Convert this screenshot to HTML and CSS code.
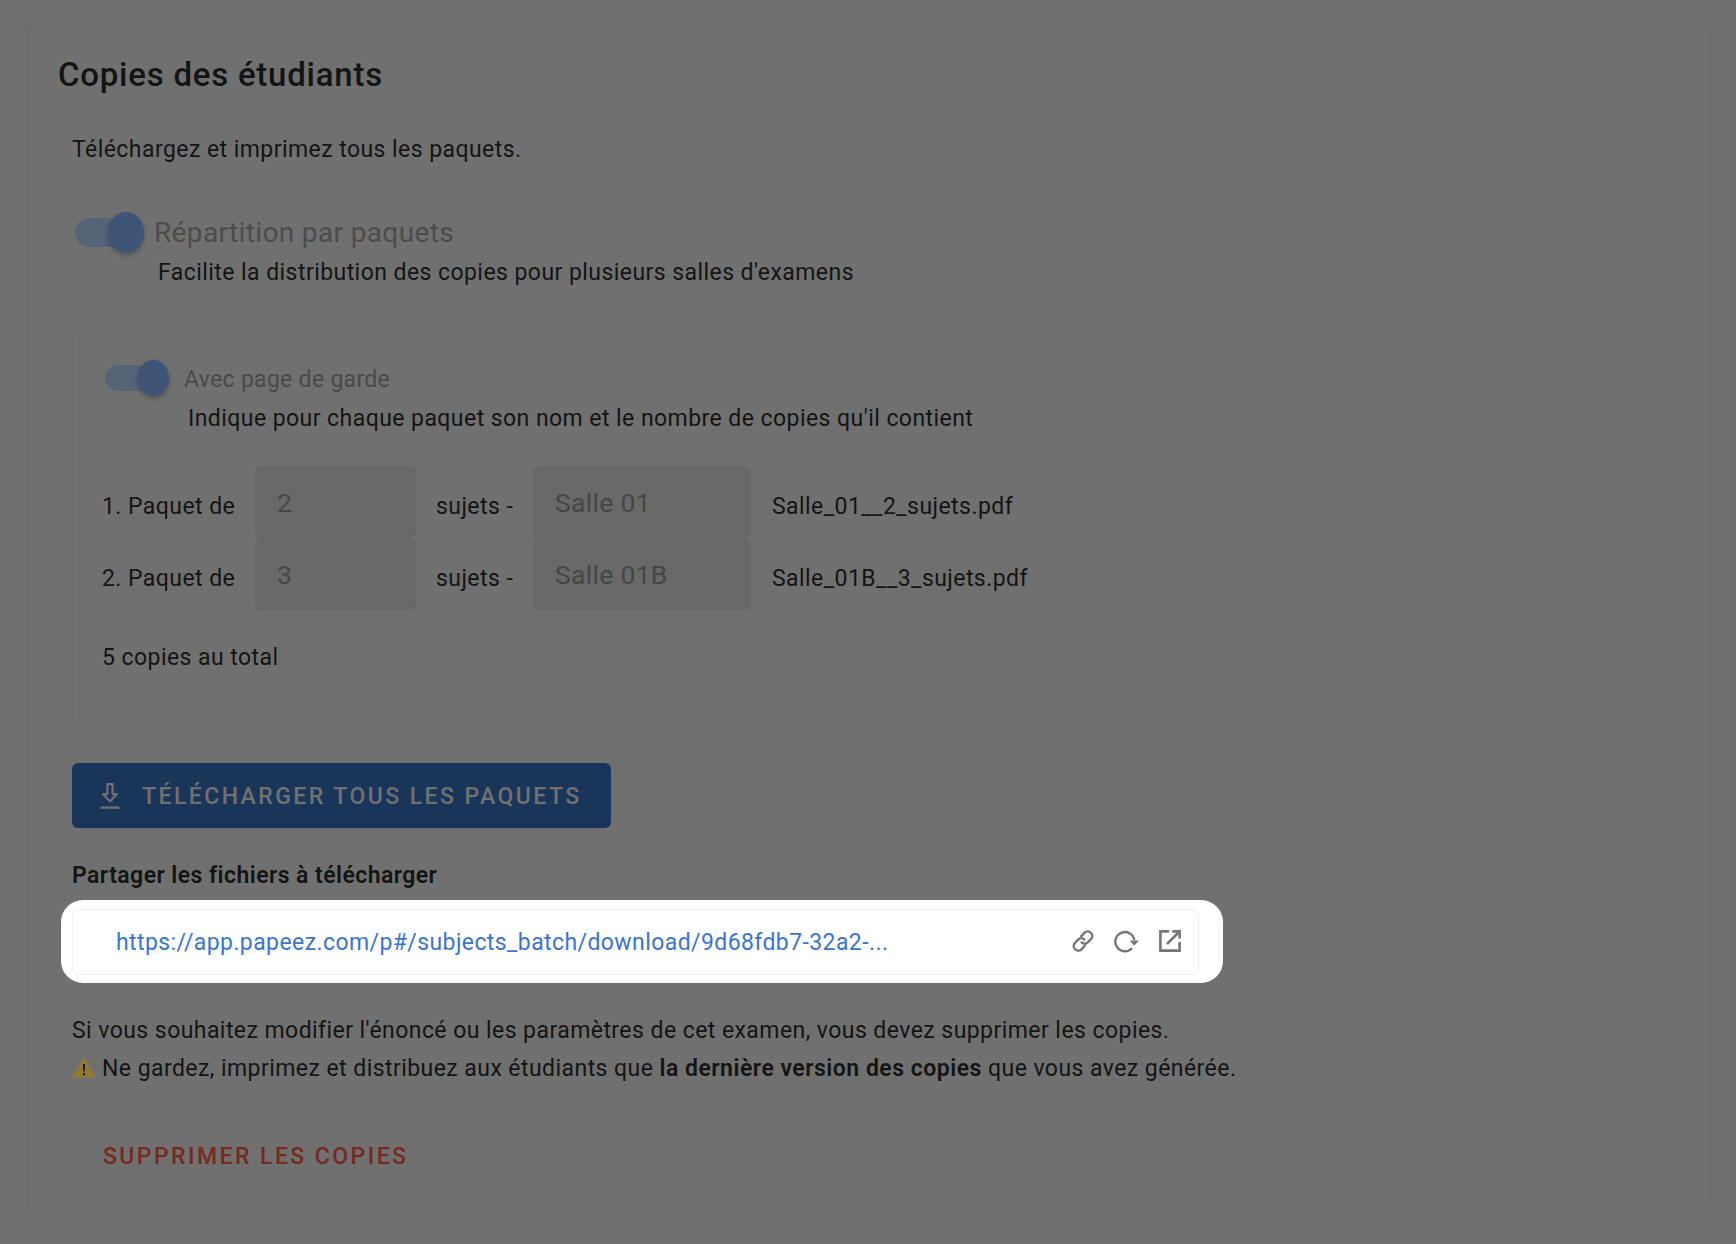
FILE: index.html

```html
<!DOCTYPE html>
<html lang="fr">
<head>
  <meta charset="UTF-8">
  <title>Copies des étudiants</title>
  <link rel="stylesheet" href="styles.css">
</head>
<body>
  <div class="card">
    <h2 class="title">Copies des étudiants</h2>
    <div class="section">
      <p class="intro">Téléchargez et imprimez tous les paquets.</p>

      <div class="switch-row">
        <span class="switch"><span class="knob"></span></span>
        <span class="switch-label">Répartition par paquets</span>
      </div>
      <p class="hint">Facilite la distribution des copies pour plusieurs salles d'examens</p>

      <div class="batches">
        <div class="switch-row small">
          <span class="switch"><span class="knob"></span></span>
          <span class="switch-label">Avec page de garde</span>
        </div>
        <p class="hint">Indique pour chaque paquet son nom et le nombre de copies qu'il contient</p>

        <div class="batch">
          <span class="batch-num">1. Paquet de</span>
          <input class="field count" type="text" value="2" disabled>
          <span class="batch-sep">sujets -</span>
          <input class="field room" type="text" value="Salle 01" disabled>
          <span class="batch-file">Salle_01__2_sujets.pdf</span>
        </div>
        <div class="batch">
          <span class="batch-num">2. Paquet de</span>
          <input class="field count" type="text" value="3" disabled>
          <span class="batch-sep">sujets -</span>
          <input class="field room" type="text" value="Salle 01B" disabled>
          <span class="batch-file">Salle_01B__3_sujets.pdf</span>
        </div>
        <p class="total">5 copies au total</p>
      </div>

      <button class="btn-download">
        <svg class="dl-icon" viewBox="0 0 20 26" width="20" height="26" fill="none" stroke="#707070" stroke-width="2.4">
          <path d="M7.4 1.2v10H3.2l6.8 7.2 6.8-7.2h-4.2v-10z" stroke-width="2.2" stroke-linejoin="round"/>
          <path d="M0.6 24.6h18.8"/>
        </svg>
        <span class="btn-text">TÉLÉCHARGER TOUS LES PAQUETS</span>
      </button>

      <h3 class="share-title">Partager les fichiers à télécharger</h3>
      <div class="spotlight">
        <div class="share-box">
          <a class="share-link" href="#">https://app.papeez.com/p#/subjects_batch/download/9d68fdb7-32a2-...</a>
          <div class="share-icons">
            <svg viewBox="0 0 24 24" width="24" height="24" fill="none" stroke="#757575" stroke-width="2.4" stroke-linecap="round">
              <path d="M10.2 7.2l3.4-3.6a4.4 4.4 0 0 1 6.4 0.4 4.4 4.4 0 0 1 0 6.2l-3.2 3.2a4.4 4.4 0 0 1-6.2 0"/>
              <path d="M13.8 16.8l-3.4 3.6a4.4 4.4 0 0 1-6.4-0.4 4.4 4.4 0 0 1 0-6.2l3.2-3.2a4.4 4.4 0 0 1 6.2 0"/>
            </svg>
            <svg viewBox="0 0 25 24" width="25" height="24" fill="none" stroke="#757575" stroke-width="2.4">
              <path d="M18 19.2A9.6 9.6 0 1 1 20.4 11"/>
              <path d="M15.6 11.4h9.2l-4.6 5.4z" fill="#757575" stroke="none"/>
            </svg>
            <svg viewBox="0 0 24 24" width="24" height="24" fill="none" stroke="#757575" stroke-width="2.6">
              <path d="M11 2.4H2.4v19.2h19.2V13"/>
              <path d="M9 15L21 3"/>
              <path d="M14.4 2.4h7.2v7.2"/>
            </svg>
          </div>
        </div>
      </div>

      <p class="notice">Si vous souhaitez modifier l'énoncé ou les paramètres de cet examen, vous devez supprimer les copies.</p>
      <p class="notice warn">
        <svg class="warn-icon" viewBox="0 0 24 21" width="24" height="21">
          <path d="M12 1.6L23 20H1z" fill="#8f7a35" stroke="#8f7a35" stroke-width="1.6" stroke-linejoin="round"/>
          <path d="M11 7h2l-.3 7.5h-1.4zM11 16h2v2.2h-2z" fill="#141414"/>
        </svg>
        <span>Ne gardez, imprimez et distribuez aux étudiants que <b>la dernière version des copies</b> que vous avez générée.</span>
      </p>

      <button class="btn-delete">SUPPRIMER LES COPIES</button>
    </div>
  </div>
</body>
</html>
```

FILE: styles.css

```css
body {
  margin: 0;
  height: 1244px;
  overflow: hidden;
  box-sizing: border-box;
  padding: 18px 25px 0 28px;
  background-color: #6d6f71;
  font-family: Roboto, sans-serif;
  font-size: 23px;
  letter-spacing: 0.44px;
  color: #141414;
}
p {
  margin: 0;
}
.card {
  height: 1199px;
  box-sizing: border-box;
  padding: 37px 27px 0 29px;
  background-color: #707070;
  border: 1px solid #6a6a6a;
  border-radius: 14px;
}
.title {
  margin: 0;
  font-size: 33px;
  font-weight: 500;
  line-height: 38px;
  letter-spacing: 0.76px;
}
.section {
  padding-left: 14px;
}
.intro {
  margin-top: 41px;
  line-height: 30px;
}
.switch-row {
  display: flex;
  align-items: center;
  gap: 11px;
  margin-top: 47px;
  height: 41px;
  padding-left: 3px;
}
.switch {
  position: relative;
  width: 68px;
  height: 29px;
  margin-top: -1px;
  border-radius: 15px;
  background-color: #566478;
}
.knob {
  position: absolute;
  top: -6px;
  right: -1px;
  width: 36px;
  height: 41px;
  border-radius: 50%;
  background-color: #3f5578;
  box-shadow: 0 2px 5px rgba(0, 0, 0, 0.3);
}
.switch-label {
  font-size: 28px;
  letter-spacing: 0.36px;
  color: #4c4c4c;
}
.hint {
  margin-top: 5px;
  margin-left: 86px;
  line-height: 30px;
}
.batches {
  height: 414px;
  box-sizing: border-box;
  margin-top: 33px;
  padding: 39px 29px 0;
  border: 1px solid #6a6a6a;
  border-radius: 14px;
}
.small {
  margin-top: 0;
  height: 36px;
  padding-left: 3px;
  gap: 16px;
}
.small .switch {
  width: 63px;
  height: 26px;
  margin-top: -3px;
}
.small .knob {
  top: -5px;
  width: 31px;
  height: 36px;
}
.small .switch-label {
  font-size: 23px;
  letter-spacing: 0.3px;
  color: #4a4a4a;
}
.batches .hint {
  margin-top: 7px;
  margin-left: 86px;
}
.batch {
  display: flex;
  align-items: center;
  height: 72px;
}
.hint + .batch {
  margin-top: 32px;
}
.batch-num {
  width: 153px;
  padding-top: 9px;
}
.batch-sep {
  width: 117px;
  padding: 9px 0 0 20px;
  box-sizing: border-box;
}
.batch-file {
  padding-top: 9px;
}
.field {
  box-sizing: border-box;
  height: 72px;
  padding: 0 22px;
  border: none;
  border-radius: 6px;
  background-color: #686868;
  font-family: Roboto, sans-serif;
  font-size: 26.5px;
  letter-spacing: 0.3px;
  color: #464646;
}
.count {
  width: 161px;
}
.room {
  width: 218px;
  margin-right: 21px;
}
.total {
  margin-top: 33px;
  line-height: 30px;
}
.btn-download {
  display: flex;
  align-items: center;
  gap: 22px;
  width: 539px;
  height: 65px;
  margin-top: 28px;
  padding: 0 0 0 28px;
  border: none;
  border-radius: 6px;
  background-color: #1a355a;
  font-family: Roboto, sans-serif;
  font-size: 23px;
  font-weight: 500;
  letter-spacing: 2.44px;
  color: #707070;
}
.btn-text {
  padding-top: 2px;
}
.share-title {
  margin: 33px 0 0;
  font-size: 23px;
  font-weight: 600;
  line-height: 30px;
}
.spotlight {
  width: 1162px;
  height: 83px;
  box-sizing: border-box;
  margin: 9px 0 0 -11px;
  padding: 9px 24px 8px 11px;
  background-color: #ffffff;
  border-radius: 22px;
}
.share-box {
  display: flex;
  align-items: center;
  justify-content: space-between;
  height: 66px;
  box-sizing: border-box;
  padding: 0 16px 0 43px;
  border: 1px solid #eef0f6;
  border-radius: 6px;
}
.share-link {
  letter-spacing: 0.41px;
  color: #3a74cf;
  text-decoration: none;
}
.share-icons {
  display: flex;
  align-items: center;
  gap: 19px;
  margin-top: -2px;
}
.notice {
  line-height: 38px;
}
.spotlight + .notice {
  margin-top: 29px;
}
.warn {
  display: flex;
  align-items: center;
  gap: 6px;
}
.warn-icon {
  margin-top: -4px;
}
.warn b {
  font-weight: 600;
  letter-spacing: 0.5px;
}
.btn-delete {
  display: block;
  margin-top: 55px;
  margin-left: 31px;
  padding: 0;
  border: none;
  background: none;
  font-family: Roboto, sans-serif;
  font-size: 23px;
  font-weight: 500;
  letter-spacing: 2.44px;
  color: #762a20;
}
```
